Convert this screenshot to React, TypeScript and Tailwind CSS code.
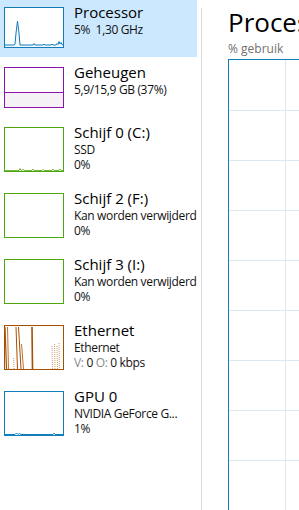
import React from "react";

const FONT = "font-['Segoe_UI','Open_Sans',sans-serif]";

type Item = {
  title: string;
  lines: React.ReactNode[];
  border: string;
  tall?: boolean;
  selected?: boolean;
  graph: React.ReactNode;
};

function CpuGraph() {
  const d =
    "M0 37 L9 37 L10 36 L11 25 L12.5 13 L14 25 L15 37 L28 37 L29 35.5 L30 37 L38 37 L39 36 L40 37 L46 37 L47 36 L48 37 L51 37 L52 35.5 L53 36.5 L54 33.5 L55 36 L56 34.5 L57 36.5 L58 37";
  return (
    <svg viewBox="0 0 58 39" preserveAspectRatio="none" className="block w-full h-full">
      <path d={d + " L58 39 L0 39 Z"} fill="#f1f6fa" />
      <path d={d} fill="none" stroke="#117dbb" strokeWidth="1" />
    </svg>
  );
}

function MemGraph() {
  return (
    <svg viewBox="0 0 58 39" preserveAspectRatio="none" className="block w-full h-full">
      <rect x="0" y="24" width="58" height="15" fill="#f4f2f4" />
      <line x1="0" y1="24.5" x2="58" y2="24.5" stroke="#8b12ae" strokeWidth="1" />
    </svg>
  );
}

function DiskGraph({ bumps }: { bumps?: boolean }) {
  const d = bumps
    ? "M0 42.5 L14 42.5 L15 40.5 L16 42.5 L18 41.5 L20 42.5 L27 42.5 L28 41 L29 42.5 L37 42.5 L38 41.5 L39 42.5 L47 42.5 L48 41 L49 42.5 L54 42.5 L55 41 L56 42.5 L58 42.5"
    : "M0 42.5 L58 42.5";
  return (
    <svg viewBox="0 0 58 43" preserveAspectRatio="none" className="block w-full h-full">
      <path d={d} fill="none" stroke="#4da60c" strokeWidth="1" opacity={bumps ? 0.8 : 0} />
    </svg>
  );
}

function NetGraph() {
  const c = "#a74f01";
  const light = "#d59a6c";
  return (
    <svg viewBox="0 0 58 43" preserveAspectRatio="none" className="block w-full h-full">
      <path d="M0 1 L1.5 43" stroke={c} strokeWidth="1.2" fill="none" />
      <path d="M2.5 1 L3.5 43" stroke={c} strokeWidth="0.8" fill="none" />
      <path d="M8.5 32 L9 43" stroke={light} strokeWidth="1" strokeDasharray="1 1" fill="none" />
      <path d="M11 1 L12.5 43" stroke={c} strokeWidth="1" fill="none" />
      <path d="M13.5 1 L16 43" stroke={c} strokeWidth="1" fill="none" />
      <path d="M16.5 18 L18.5 43" stroke={c} strokeWidth="0.8" fill="none" />
      <path d="M27 1 L27.5 43" stroke={c} strokeWidth="1.6" fill="none" />
      <path d="M47 20 L47.5 43" stroke={light} strokeWidth="1" strokeDasharray="1 1" fill="none" />
      <path d="M49.5 18 L50 43" stroke={light} strokeWidth="1" strokeDasharray="1 1" fill="none" />
      <path d="M52 20 L52.5 43" stroke={light} strokeWidth="1" strokeDasharray="1 1" fill="none" />
      <path d="M54 17 L54.5 43" stroke={light} strokeWidth="1" strokeDasharray="1 1" fill="none" />
    </svg>
  );
}

function GpuGraph() {
  const d = "M0 42.5 L10 42.5 L11.5 41 L13 42.5 L14.5 41.5 L16 42.5 L48 42.5 L49 41 L50 42.5 L58 42.5";
  return (
    <svg viewBox="0 0 58 43" preserveAspectRatio="none" className="block w-full h-full">
      <path d={d} fill="none" stroke="#117dbb" strokeWidth="1" />
    </svg>
  );
}

const items: Item[] = [
  {
    title: "Processor",
    lines: ["5%  1,30 GHz"],
    border: "border-[#117dbb]",
    selected: true,
    graph: <CpuGraph />,
  },
  {
    title: "Geheugen",
    lines: ["5,9/15,9 GB (37%)"],
    border: "border-[#8b12ae]",
    graph: <MemGraph />,
  },
  {
    title: "Schijf 0 (C:)",
    lines: ["SSD", "0%"],
    border: "border-[#4da60c]",
    tall: true,
    graph: <DiskGraph bumps />,
  },
  {
    title: "Schijf 2 (F:)",
    lines: ["Kan worden verwijderd", "0%"],
    border: "border-[#4da60c]",
    tall: true,
    graph: <DiskGraph />,
  },
  {
    title: "Schijf 3 (I:)",
    lines: ["Kan worden verwijderd", "0%"],
    border: "border-[#4da60c]",
    tall: true,
    graph: <DiskGraph />,
  },
  {
    title: "Ethernet",
    lines: [
      "Ethernet",
      <>
        <span className="text-[#8a8a8a]">V: </span>0 <span className="text-[#8a8a8a]">O: </span>0 kbps
      </>,
    ],
    border: "border-[#a74f01]",
    tall: true,
    graph: <NetGraph />,
  },
  {
    title: "GPU 0",
    lines: ["NVIDIA GeForce G...", "1%"],
    border: "border-[#117dbb]",
    tall: true,
    graph: <GpuGraph />,
  },
];

function SideItem({ item }: { item: Item }) {
  return (
    <div
      className={`flex pl-[4px] pt-[3px] ${item.tall ? "h-[63px]" : "h-[57px]"} ${
        item.selected ? "bg-[#cce8ff]" : ""
      }`}
    >
      <div
        className={`mt-[4px] w-[60px] shrink-0 border bg-white ${item.border} ${
          item.tall ? "h-[45px]" : "h-[41px]"
        }`}
      >
        {item.graph}
      </div>
      <div className="ml-[10px] min-w-0">
        <p className="text-[15px] leading-[19px] text-black whitespace-nowrap">{item.title}</p>
        {item.lines.map((l, i) => (
          <p key={i} className="text-[12px] leading-[15px] tracking-[-0.35px] text-[#111] whitespace-pre">
            {l}
          </p>
        ))}
      </div>
    </div>
  );
}

export default function App() {
  return (
    <div className={`w-[299px] h-[510px] flex bg-white overflow-hidden ${FONT}`}>
      {/* Resource list */}
      <div className="w-[197px] shrink-0 flex flex-col gap-[3px]">
        {items.map((it) => (
          <SideItem key={it.title} item={it} />
        ))}
      </div>

      {/* Divider */}
      <div className="ml-[4px] mt-[8px] w-px bg-[#d9d9d9] shrink-0" />

      {/* Detail panel */}
      <div className="flex-1 min-w-0 flex flex-col pl-[26px] pt-[4px]">
        <h1 className="text-[26px] leading-[36px] text-black whitespace-nowrap">Processor</h1>
        <p className="mt-[1px] text-[12px] leading-[15px] text-[#707070] whitespace-nowrap">% gebruik</p>
        <div className="mt-[3px] flex-1 w-[200px] border-l border-t border-[#117dbb]">
          <svg className="block w-full h-full" viewBox="0 0 199 451" preserveAspectRatio="none">
            <line x1="56.5" y1="0" x2="56.5" y2="451" stroke="#dbe9f3" strokeWidth="1" />
            {[50, 100, 150, 200, 250, 300, 350, 400].map((y) => (
              <line key={y} x1="0" y1={y + 0.5} x2="199" y2={y + 0.5} stroke="#dbe9f3" strokeWidth="1" />
            ))}
          </svg>
        </div>
      </div>
    </div>
  );
}
